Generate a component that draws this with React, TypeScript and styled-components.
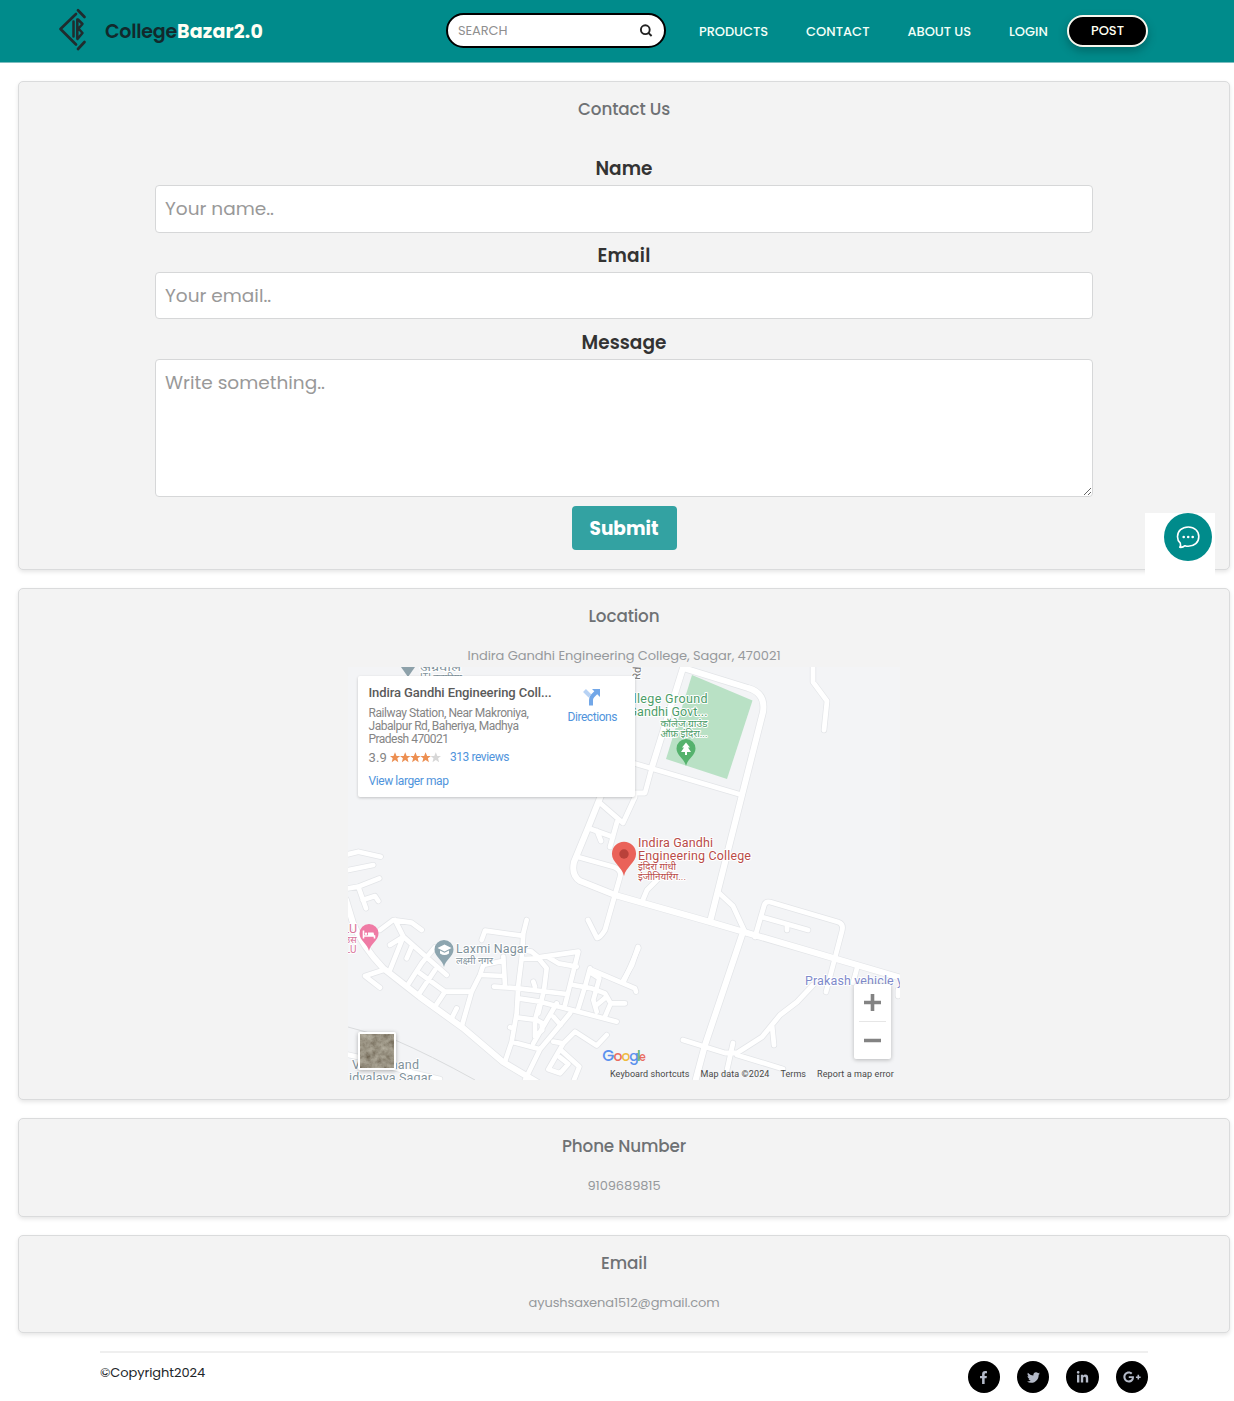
import React, { useLayoutEffect, useRef, useState } from "react";
import styled, { createGlobalStyle } from "styled-components";
import { FaFacebookF, FaTwitter, FaLinkedinIn, FaGooglePlusG } from "react-icons/fa";

const teal = "#008b8b";
const sans = `Poppins, Inter, "Open Sans", sans-serif`;

const Global = createGlobalStyle`
  *, *::before, *::after { box-sizing: border-box; }
  body { margin: 0; background: #fff; font-family: ${sans}; color: #212529; overflow-x: hidden; }
`;

const Tracked = styled.span`
  display: inline-block;
  white-space: nowrap;
`;

/* Text tracked out or in so that it takes the given width. */
function Fit({ w, children }: { w: number; children: string }) {
  const ref = useRef<HTMLSpanElement>(null);
  const [gap, setGap] = useState(0);
  useLayoutEffect(() => {
    const natural = ref.current!.getBoundingClientRect().width;
    setGap((w - natural) / children.length);
  }, [w, children]);
  return (
    <Tracked ref={ref} style={{ letterSpacing: gap }}>
      {children}
    </Tracked>
  );
}

const Header = styled.header`
  display: flex;
  align-items: center;
  height: 63px;
  padding: 0 86px 0 58px;
  background: ${teal};
  border-bottom: 1px solid #7dbdbf;
`;

const Brand = styled.a`
  display: flex;
  align-items: center;
  flex: 1;
  font-size: 19px;
  font-weight: 600;
  color: #12292c;
  gap: 17px;
  svg { margin-top: -3px; }
  b { color: #fffff4; font-weight: 700; }
`;

const Search = styled.label`
  display: flex;
  align-items: center;
  justify-content: space-between;
  width: 220px;
  height: 35px;
  margin-top: -2px;
  padding: 0 11px 0 10px;
  border: 2px solid #000;
  border-radius: 18px;
  background: #fff;
`;

const SearchInput = styled.input`
  width: 150px;
  padding: 1px 0 0;
  border: 0;
  outline: 0;
  background: none;
  font: 400 13px ${sans};
  letter-spacing: -0.1px;
  &::placeholder { color: #8f8f8f; opacity: 1; }
`;

const Nav = styled.nav`
  display: flex;
  align-items: center;
  gap: 38px;
  margin: 1px 19px 0 33px;
  color: #f4fff8;
  font-size: 13px;
  font-weight: 500;
`;

const Post = styled.button`
  width: 81px;
  height: 32px;
  margin-top: -1px;
  padding: 0;
  border: 2px solid #f7f7ee;
  border-radius: 17px;
  background: #000;
  color: #fffff0;
  font: 500 13px ${sans};
  box-shadow: 0 4px 10px rgba(0, 0, 0, 0.25);
`;

const Main = styled.main`
  display: flex;
  flex-direction: column;
  gap: 18px;
  padding: 18px 4px 0 18px;
`;

const Card = styled.section<{ $h: number }>`
  display: flex;
  flex-direction: column;
  align-items: center;
  height: ${(p) => p.$h}px;
  padding-top: 14px;
  border: 1px solid #dadbdc;
  border-radius: 5px;
  background: #f3f3f3;
  box-shadow: 0 2px 4px rgba(0, 0, 0, 0.1);
`;

const Title = styled.h2`
  margin: 0;
  height: 27px;
  line-height: 27px;
  font-size: 16.8px;
  font-weight: 500;
  color: #6e7174;
`;

const Detail = styled.p`
  margin: 15px 0 0;
  height: 22px;
  line-height: 22px;
  font-size: 13px;
  color: #96999c;
`;

const Form = styled.form`
  display: flex;
  flex-direction: column;
  align-items: center;
  width: 938px;
  margin-top: 28px;
`;

const Label = styled.label`
  height: 34px;
  line-height: 35px;
  font-size: 18.5px;
  font-weight: 600;
  color: #333;
`;

const Field = styled.input`
  width: 100%;
  height: 47.5px;
  margin-bottom: 5.4px;
  padding: 0 9px 0.6px;
  border: 1px solid #d6d7d8;
  border-radius: 4px;
  outline: 0;
  background: #fff;
  font: 400 18.5px ${sans};
  &::placeholder { color: #999; opacity: 1; }
`;

const Area = styled(Field).attrs({ as: "textarea" })`
  height: 138px;
  margin-bottom: 9.2px;
  padding: 9px 9px;
  resize: vertical;
`;

const Submit = styled.button`
  width: 105px;
  height: 44px;
  padding: 1px 0 0;
  border: 0;
  border-radius: 4px;
  background: #33a2a2;
  color: #fff;
  font: 700 18.5px ${sans};
`;

const MapFrame = styled.div`
  position: relative;
  width: 552px;
  height: 413px;
  overflow: hidden;
  font-family: Roboto, sans-serif;
  > svg { display: block; }
`;

const InfoCard = styled.div`
  position: absolute;
  left: 10px;
  top: 9px;
  display: flex;
  justify-content: space-between;
  width: 277px;
  height: 121px;
  padding: 8px 18px 0 10.5px;
  border-radius: 2px;
  background: #fff;
  box-shadow: 0 1px 3px rgba(0, 0, 0, 0.2);
  color: #858585;
  font-size: 12px;
  line-height: 13px;
`;

const PlaceName = styled.div`
  height: 18px;
  line-height: 18px;
  font-size: 13px;
  font-weight: 500;
  color: #5a5a5a;
  margin-bottom: 5px;
`;

const Blue = styled.a`
  color: #5094dc;
  font-size: 12px;
`;

const Rating = styled.div`
  display: flex;
  align-items: center;
  height: 18px;
  margin: 2px 0 9px;
  font-size: 13px;
  svg { margin: 0 9px 0 3px; }
`;

const Directions = styled.div`
  display: flex;
  flex-direction: column;
  align-items: center;
  gap: 4px;
  padding-top: 3px;
`;

const Satellite = styled.div`
  position: absolute;
  left: 10px;
  top: 365px;
  width: 38px;
  height: 38px;
  border: 2px solid #fff;
  border-radius: 2px;
  overflow: hidden;
  box-shadow: 0 1px 4px rgba(0, 0, 0, 0.3);
`;

const Zoom = styled.div`
  position: absolute;
  right: 9.5px;
  top: 317px;
  display: flex;
  flex-direction: column;
  align-items: center;
  width: 37px;
  height: 75px;
  border-radius: 2px;
  background: #fff;
  box-shadow: 0 1px 4px rgba(0, 0, 0, 0.25);
`;

const Attribution = styled.div`
  position: absolute;
  right: 6px;
  bottom: 0;
  display: flex;
  gap: 11px;
  height: 14px;
  line-height: 16px;
  font-size: 9px;
  color: #484848;
`;

const Chat = styled.div`
  position: absolute;
  left: 1145px;
  top: 513px;
  display: flex;
  justify-content: flex-end;
  width: 70px;
  height: 70px;
  padding-right: 3px;
  background: #fff;
`;

const ChatButton = styled.button`
  display: grid;
  place-items: center;
  width: 48px;
  height: 48px;
  padding: 0;
  border: 0;
  border-radius: 50%;
  background: ${teal};
`;

const Footer = styled.footer`
  display: flex;
  justify-content: space-between;
  margin: 18px 86px 0 100px;
  padding-top: 8px;
  height: 50px;
  border-top: 2px solid #efefef;
  font-size: 13px;
  line-height: 23px;
`;

const Socials = styled.div`
  display: flex;
  gap: 17px;
`;

const Social = styled.a`
  display: grid;
  place-items: center;
  width: 32.3px;
  height: 32.3px;
  border-radius: 50%;
  background: #000;
  color: #b4bac8;
  font-size: 13px;
`;

const Logo = () => (
  <svg width="30" height="43" viewBox="0 0 30 43" fill="none" stroke="#202c2e" strokeWidth="2.7" strokeLinecap="round" strokeLinejoin="round">
    <path d="M18 6 L2.5 21 L18 36.5 M20 2.3 L26.5 9 M20 41 L26.5 34" />
    <path strokeWidth="2.5" d="M15.5 13.5V28.5M19.3 11.5V30.5M20 11.5L24.5 16L20.5 20.5L24.5 25L19.5 31" />
  </svg>
);

const localRoads = [
  "M15 45L55 35L122 50", "M15 92L100 75", "M15 147L55 140L118 115", "M55 140L78 205", "M68 180L105 168L115 183",
  "M120 270L160 240L215 248L245 270", "M165 240L190 290L320 405", "M150 315L190 290L150 390", "M215 320L200 355",
  "M285 322L245 370L205 432", "M240 400L315 455L395 455", "M285 390L235 465", "M315 455L285 500", "M350 505L335 535",
  "M130 390L75 408L120 443", "M425 300L435 272L545 287", "M560 240L550 280L545 355L535 435L530 520L515 605L495 665",
  "M430 375L420 405L395 455L365 560", "M425 405L490 408", "M490 350L495 435", "M430 375L490 362", "M462 440L535 445L680 462",
  "M545 330L575 335L595 352L715 335L690 435L675 495", "M545 357L595 355L620 385L612 450L595 520", "M625 352L655 370L710 380",
  "M535 475L600 485L830 545", "M580 425L585 440", "M755 390L885 445L888 455", "M895 325L850 428", "M750 385L735 440L715 505",
  "M700 435L755 445L795 460L812 490L855 490", "M755 400L778 415L760 480L770 515", "M812 490L795 530", "M800 470L770 495",
  "M530 532L590 540L612 552", "M600 485L585 540L585 590L607 570L605 550", "M515 605L600 628L690 520", "M650 490L580 610",
  "M640 530L662 555", "M600 628L555 720", "M640 605L670 610L705 575L770 617L800 585", "M670 610L625 688L660 700L685 672L660 652",
  "M665 632L718 680L700 725", "M510 562L520 565",
].join("");

const collectors = [
  "M633 763L742 795", "M652 767L645 793L633 793", "M635 797L623 823L600 803", "M617 822L610 847", "M588 828L613 837", "M597 831L601 841",
  "M813 660V682L827 701L824 730", "M578 857L614 867Q622 870 620 877L605 930Q600 938 597 938L588 920", "M642 902L647 890L657 880",
  "M718 892L733 906L745 932", "M755 937L764 906Q765 901 770 902L838 922Q844 924 842 931L826 992", "M762 917L808 930", "M787 925V930",
  "M683 1040L725 1053H737L762 1037L780 1015L797 1002L813 985", "M772 1025L774 1045", "M733 1043L727 1070", "M737 1055L783 1069",
  "M857 968L853 983", "M898 990V996", "M340 1053L372 1060", "M385 1066L440 1079", "M638 947L632 965L623 981",
].join("");

const arterials = [
  "M346 900L353 923Q362 946 383 968L420 997L463 1028L503 1062L540 1084",
  "M604 788L588 828L574 862Q571 875 580 881L615 895L710 922L833 958L905 979",
  "M652 767L683 668L748 688Q766 693 763 712L742 795L710 922", "M742 935L705 1045L693 1090",
].join("");

const Pin = ({ x, y, color, s = 1 }: { x: number; y: number; color: string; s?: number }) => (
  <path transform={`translate(${x} ${y}) scale(${s})`} d="M0 0C-1.3-7-9.5-10.5-9.5-17.5A9.5 9.5 0 0 1 9.5-17.5C9.5-10.5 1.3-7 0 0Z" fill={color} />
);

const halo = { paintOrder: "stroke", stroke: "#fff", strokeWidth: 2, strokeLinejoin: "round" } as const;
const squeeze = { lengthAdjust: "spacingAndGlyphs" } as const;

const MapDrawing = () => (
  <svg width="552" height="413" viewBox="348 667 552 413" fontFamily='Roboto, "Noto Sans Devanagari", sans-serif'>
    <rect x="348" y="667" width="552" height="413" fill="#f3f4f6" />
    <path d="M692 675L752.5 700.5L727 779L666 759Z" fill="#b9e1c5" />
    <path d="M348 1027L395 1040Q430 1055 475 1080M630 690L640 667" fill="none" stroke="#d9dbdd" />
    <g fill="none" strokeLinecap="round" strokeLinejoin="round">
      {[["#e3e5e8", 1.5], ["#fff", 0]].map(([color, extra]) => (
        <g key={color} stroke={color as string}>
          <path d={localRoads} transform="translate(340 840) scale(.33333)" strokeWidth={14 + Number(extra) * 3} />
          <path d={collectors} strokeWidth={4.8 + Number(extra)} />
          <path d={arterials} strokeWidth={6 + Number(extra)} />
        </g>
      ))}
    </g>
    <path d="M401 667H415L408 677Z" fill="#8da1aa" />
    <g {...halo} fill="#7f929b">
      <text x="420" y="671" fontSize="10" textLength="41" {...squeeze}>अग्रवाल</text>
      <text x="420" y="681" fontSize="10" textLength="42" {...squeeze}>ITI करारिया</text>
      <text x="456" y="953" fontSize="12.5" textLength="72">Laxmi Nagar</text>
      <text x="456" y="963.5" fontSize="9.5" textLength="37" {...squeeze}>लक्ष्मी नगर</text>
      <text x="352" y="1069" fontSize="12.5" textLength="67">Vivekanand</text>
      <text x="349" y="1082" fontSize="12.5" textLength="83">idyalaya Sagar</text>
    </g>
    <g {...halo} fill="#4b9c68" textAnchor="end">
      <text x="707.5" y="703" fontSize="12.5" textLength="90">College Ground</text>
      <text x="707.5" y="716" fontSize="12.5" textLength="79">Gandhi Govt...</text>
      <text x="707.5" y="726.5" fontSize="9.5" textLength="47" {...squeeze}>कॉलेज ग्राउंड</text>
      <text x="707.5" y="737" fontSize="9.5" textLength="47" {...squeeze}>ऑफ़ इंदिरा...</text>
    </g>
    <text transform="translate(640 680) rotate(-86)" fontSize="11" fill="#777" {...halo}>Rd</text>
    <Pin x={686} y={766} color="#55b26d" />
    <path d="M686 742.5L682 747.5H684L681 752H685V755H687V752H691L688 747.5H690Z" fill="#fff" />
    <Pin x={624} y={876} color="#ea6259" s={1.27} />
    <circle cx="624" cy="854" r="4.7" fill="#b9413a" />
    <g {...halo} fill="#b94b48">
      <text x="638" y="847" fontSize="12.5" textLength="75">Indira Gandhi</text>
      <text x="638" y="860" fontSize="12.5" textLength="113">Engineering College</text>
      <text x="638" y="870" fontSize="9.5" textLength="38" {...squeeze}>इंदिरा गांधी</text>
      <text x="638" y="880" fontSize="9.5" textLength="48" {...squeeze}>इंजीनियरिंग...</text>
    </g>
    <Pin x={369} y={951} color="#ef7ba5" />
    <path d="M363.5 930.5V938.5M363.5 936H374.5V938.5" fill="none" stroke="#fff" strokeWidth="1.6" />
    <path d="M368 932.5H373.5L374.5 936H368Z" fill="#fff" />
    <circle cx="366" cy="933.7" r="1.2" fill="#fff" />
    <g {...halo} fill="#d9749b">
      <text x="342.5" y="933" fontSize="12.5">LU</text>
      <text x="345" y="943" fontSize="9.5">उस</text>
      <text x="345" y="953" fontSize="10">LU</text>
    </g>
    <Pin x={444} y={967} color="#8da5af" />
    <path d="M437.5 948L444.5 944.5L451.5 948L444.5 951.5ZM440 950.5V953.5Q444.5 956.5 449 953.5V950.5L444.5 952.8Z" fill="#fff" />
    <text x="805" y="985" fontSize="12.5" textLength="98" fill="#7e8acb" {...halo}>Prakash vehicle y</text>
    <g fontFamily='Poppins, Inter, "Open Sans", sans-serif' fontSize="14" fontWeight="500">
      <text x="602.2" y="1061" fontSize="15.5" fill="#5a91ee">G</text>
      <text x="613.5" y="1061" fill="#e96b60">o</text>
      <text x="621.6" y="1061" fill="#efba3d">o</text>
      <text x="629.3" y="1061" fill="#5a91ee">g</text>
      <text x="636.9" y="1061" fill="#5eb577">l</text>
      <text x="639.2" y="1061" fill="#e96b60" fontSize="12" textLength="6.5" {...squeeze}>e</text>
    </g>
  </svg>
);

const Stars = () => (
  <svg width="51" height="11" viewBox="0 0 51 11">
    {[0, 1, 2, 3, 4].map((i) => (
      <path key={i} transform={`translate(${i * 10.2} 0)`} d="M5 .2L6.5 3.9H10.2L7.3 6.3L8.3 10.2L5 7.9L1.7 10.2L2.7 6.3L-.2 3.9H3.5Z" fill={i < 4 ? "#ec8f52" : "#d7d7d7"} />
    ))}
  </svg>
);

const LocationMap = () => (
  <MapFrame>
    <MapDrawing />
    <InfoCard>
      <div>
        <PlaceName><Fit w={183}>Indira Gandhi Engineering Coll...</Fit></PlaceName>
        <div><Fit w={160}>Railway Station, Near Makroniya,</Fit></div>
        <div><Fit w={150}>Jabalpur Rd, Baheriya, Madhya</Fit></div>
        <div><Fit w={80}>Pradesh 470021</Fit></div>
        <Rating>
          <Fit w={18.5}>3.9</Fit>
          <Stars />
          <Blue><Fit w={59}>313 reviews</Fit></Blue>
        </Rating>
        <Blue><Fit w={80}>View larger map</Fit></Blue>
      </div>
      <Directions>
        <svg width="18" height="20" viewBox="0 0 18 20" fill="none" strokeWidth="4">
          <path d="M1.5 3.5L7 9" stroke="#b7d2f4" />
          <path d="M8 18.5V13Q8 10.5 10 8.5L13.5 5" stroke="#72a7e8" />
          <path d="M9 2H17V10Z" fill="#72a7e8" />
        </svg>
        <Blue><Fit w={49.5}>Directions</Fit></Blue>
      </Directions>
    </InfoCard>
    <Satellite>
      <svg width="34" height="34">
        <filter id="terrain">
          <feTurbulence type="fractalNoise" baseFrequency=".16" numOctaves="4" seed="8" />
          <feColorMatrix values=".4 0 0 0 .12  .4 0 0 0 .09  .35 0 0 0 .05  0 0 0 0 1" />
        </filter>
        <rect width="34" height="34" filter="url(#terrain)" />
      </svg>
    </Satellite>
    <Zoom>
      <svg width="37" height="75" viewBox="0 0 37 75">
        <path d="M10 18.5H27M18.5 10V27M10 56.5H27" stroke="#838383" strokeWidth="3.6" />
        <path d="M5 37.5H32" stroke="#e6e6e6" />
      </svg>
    </Zoom>
    <Attribution>
      <Fit w={79.5}>Keyboard shortcuts</Fit>
      <Fit w={69}>Map data ©2024</Fit>
      <Fit w={25.5}>Terms</Fit>
      <Fit w={77}>Report a map error</Fit>
    </Attribution>
  </MapFrame>
);

export default function App() {
  return (
    <>
      <Global />
      <Header>
        <Brand>
          <Logo />
          <span><Fit w={72}>College</Fit><b><Fit w={86}>Bazar2.0</Fit></b></span>
        </Brand>
        <Search>
          <SearchInput placeholder="SEARCH" />
          <svg width="14" height="14" viewBox="0 0 14 14" fill="none" stroke="#222" strokeWidth="1.9">
            <circle cx="6.3" cy="6.7" r="4.4" />
            <path d="M9.4 9.8L12.6 13" />
          </svg>
        </Search>
        <Nav>
          <Fit w={69}>PRODUCTS</Fit>
          <Fit w={63.5}>CONTACT</Fit>
          <Fit w={63.5}>ABOUT US</Fit>
          <Fit w={39}>LOGIN</Fit>
        </Nav>
        <Post><Fit w={33}>POST</Fit></Post>
      </Header>
      <Main>
        <Card $h={489}>
          <Title><Fit w={92}>Contact Us</Fit></Title>
          <Form>
            <Label><Fit w={57}>Name</Fit></Label>
            <Field placeholder="Your name.." />
            <Label><Fit w={53}>Email</Fit></Label>
            <Field placeholder="Your email.." />
            <Label><Fit w={85}>Message</Fit></Label>
            <Area placeholder="Write something.." />
            <Submit type="button"><Fit w={69}>Submit</Fit></Submit>
          </Form>
        </Card>
        <Card $h={512}>
          <Title><Fit w={71}>Location</Fit></Title>
          <Detail><Fit w={313}>Indira Gandhi Engineering College, Sagar, 470021</Fit></Detail>
          <LocationMap />
        </Card>
        <Card $h={99}>
          <Title><Fit w={124}>Phone Number</Fit></Title>
          <Detail><Fit w={73}>9109689815</Fit></Detail>
        </Card>
        <Card $h={98}>
          <Title><Fit w={46}>Email</Fit></Title>
          <Detail><Fit w={191}>ayushsaxena1512@gmail.com</Fit></Detail>
        </Card>
      </Main>
      <Footer>
        <Fit w={105}>©Copyright2024</Fit>
        <Socials>
          <Social><FaFacebookF /></Social>
          <Social><FaTwitter /></Social>
          <Social><FaLinkedinIn /></Social>
          <Social><FaGooglePlusG size={18} /></Social>
        </Socials>
      </Footer>
      <Chat>
        <ChatButton aria-label="Chat">
          <svg width="24" height="24" viewBox="0 0 24 24" fill="none" stroke="#fff" strokeWidth="1.6" strokeLinejoin="round">
            <path d="M4.3 18.2C2.3 16.3 1.5 14.3 1.5 11.7C1.5 6 6 2 12.3 2S22.8 6 22.8 11.7S18.3 21.3 12.3 21.3C11 21.3 10 21.1 9 20.7C7.5 22 5.5 22.6 3.8 22.3C4.7 21 4.9 19.8 4.3 18.2Z" />
            <g fill="#fff" stroke="none"><circle cx="7.7" cy="12" r="1.3" /><circle cx="12.2" cy="12" r="1.3" /><circle cx="16.7" cy="12" r="1.3" /></g>
          </svg>
        </ChatButton>
      </Chat>
    </>
  );
}
